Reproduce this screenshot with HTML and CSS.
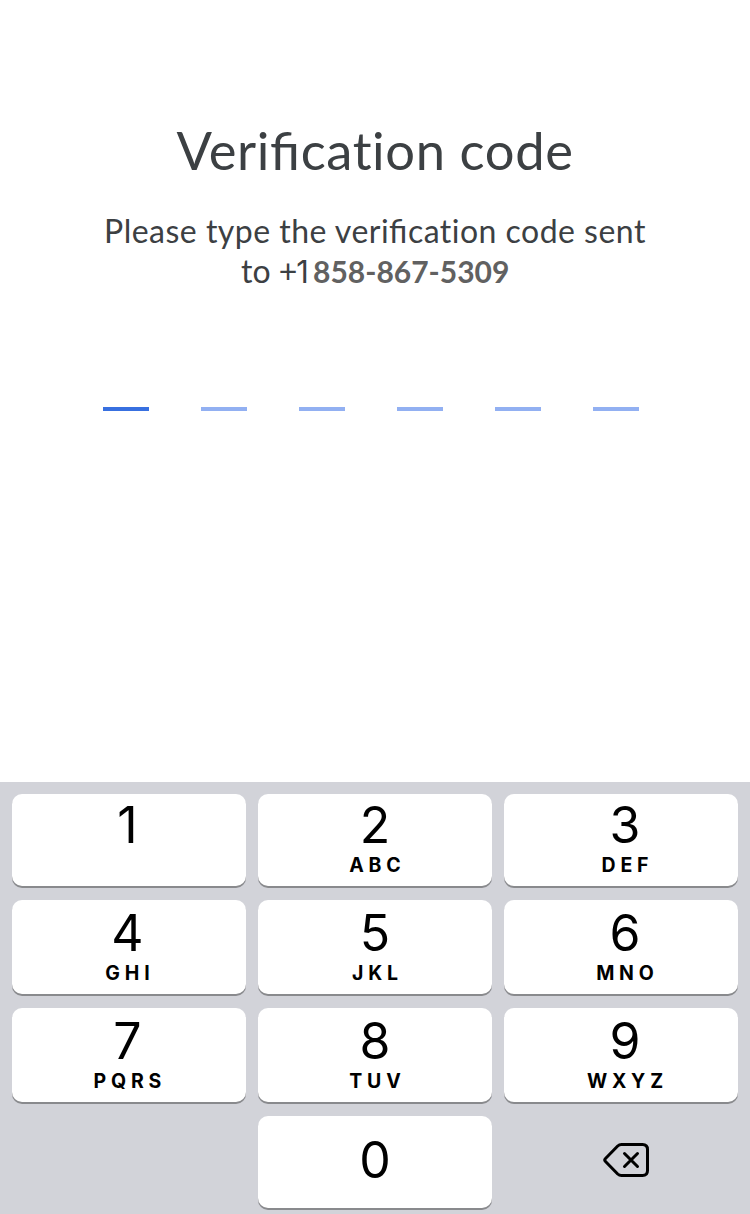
FILE: index.html
```html
<!DOCTYPE html>
<html lang="en">
<head>
<meta charset="utf-8">
<title>Verification code</title>
<link rel="stylesheet" href="styles.css">
</head>
<body>
<main class="screen">
  <section class="verify">
    <h1 class="title">Veri<span class="liga">fi</span>cation code</h1>
    <p class="message">
      <span class="line">Please type the veri<span class="liga">fi</span>cation code sent</span>
      <span class="line second"><span class="prefix">to +<span class="country">1</span></span><strong class="phone">858-867-5309</strong></span>
    </p>
    <div class="code">
      <i class="slot active"></i><i class="slot"></i><i class="slot"></i><i class="slot"></i><i class="slot"></i><i class="slot"></i>
    </div>
  </section>
  <section class="keypad">
    <div class="key top left"><span class="digit">1</span></div>
    <div class="key top"><span class="digit">2</span><span class="letters">ABC</span></div>
    <div class="key top right"><span class="digit">3</span><span class="letters">DEF</span></div>
    <div class="key left"><span class="digit">4</span><span class="letters">GHI</span></div>
    <div class="key"><span class="digit">5</span><span class="letters">JKL</span></div>
    <div class="key right"><span class="digit">6</span><span class="letters">MNO</span></div>
    <div class="key left"><span class="digit">7</span><span class="letters">PQRS</span></div>
    <div class="key"><span class="digit">8</span><span class="letters">TUV</span></div>
    <div class="key right"><span class="digit">9</span><span class="letters">WXYZ</span></div>
    <div class="blank"></div>
    <div class="key zero"><span class="digit">0</span></div>
    <div class="delete">
      <svg width="48" height="36" viewBox="0 0 48 36" fill="none" stroke="#000" stroke-width="3" stroke-linecap="round" stroke-linejoin="round">
        <path d="M18.5 2.5H39.500Q44.500 2.500 44.500 7.500V28.500Q44.500 33.500 39.500 33.500H18.500Q16.300 33.500 14.700 32L2.500 19.500Q1 18 2.500 16.500L14.700 4Q16.300 2.500 18.500 2.500Z"/>
        <path d="M21.500 11.500L34.500 24.500M34.500 11.500L21.500 24.500"/>
      </svg>
    </div>
  </section>
</main>
</body>
</html>
```
FILE: styles.css
```css
* { box-sizing: border-box; }
body { margin: 0; background: #fff; }
.screen {
  display: flex;
  flex-direction: column;
  width: 750px;
  height: 1214px;
  overflow: hidden;
}
.verify {
  height: 782px;
  padding-top: 120px;
  font-family: Lato, sans-serif;
  font-variant-ligatures: none;
  color: #3c4043;
}
.liga { font-variant-ligatures: normal; font-feature-settings: "liga" 1; }
.title {
  margin: 0;
  text-align: center;
  font-size: 52.5px;
  line-height: 60px;
  font-weight: 400;
  letter-spacing: 0.6px;
}
.message {
  margin: 31px 0 0;
  font-size: 32px;
  line-height: 40px;
  white-space: nowrap;
}
.line { display: block; text-align: center; letter-spacing: 0.48px; }
.second { display: flex; padding-left: 241px; letter-spacing: 0; }
.prefix { width: 72px; text-align: left; }
.country { margin-left: -1px; font-family: Inter, sans-serif; font-size: 31px; line-height: 1; }
.phone {
  font-size: 30px;
  font-weight: 700;
  color: #616161;
  letter-spacing: 0;
}
.code {
  display: flex;
  gap: 52px;
  padding: 116px 0 0 103px;
}
.slot { width: 46px; height: 4px; background: #92b0f2; }
.slot.active { background: #3870e0; }
.keypad {
  flex: 1;
  display: grid;
  grid-template-columns: repeat(3, 234px);
  grid-template-rows: 92px 94px 94px 92px;
  gap: 14px 12px;
  padding: 12px 12px 0;
  background: #d2d3d9;
  font-family: Inter, sans-serif;
  color: #000;
}
.key {
  display: flex;
  flex-direction: column;
  align-items: center;
  padding-top: 3px;
  background: #fff;
  border-radius: 10px;
  box-shadow: 0 2px 0 #898a8d;
}
.key.top { padding-top: 1px; }
.key.left { padding-right: 3px; }
.key.right { padding-left: 8px; }
.digit { font-size: 50px; line-height: 61px; font-weight: 400; }
.letters {
  font-size: 19.5px;
  line-height: 18px;
  font-weight: 700;
  letter-spacing: 4.8px;
  margin-right: -4.8px;
}
.key.zero { padding-top: 0; }
.zero .digit { line-height: 88px; }
.delete {
  display: flex;
  justify-content: center;
  padding: 26px 0 0 12px;
}
```
